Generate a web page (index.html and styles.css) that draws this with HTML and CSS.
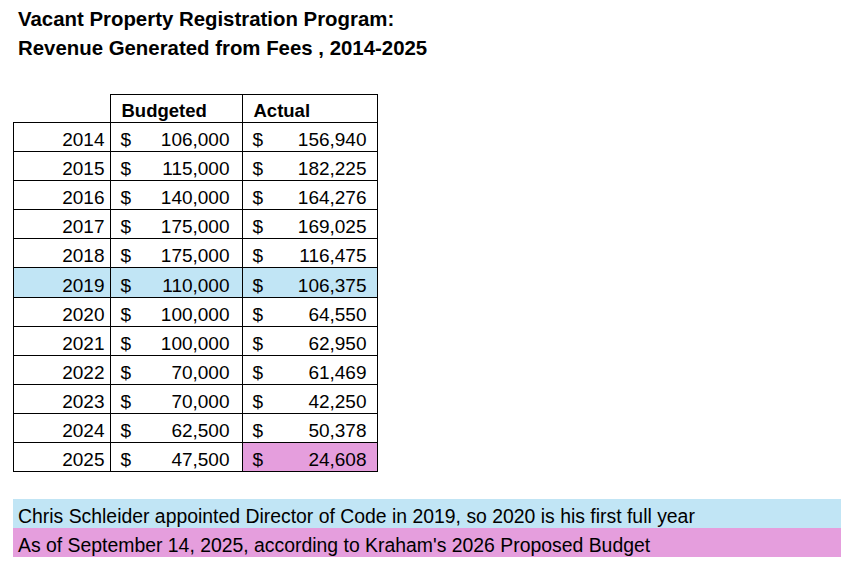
FILE: index.html
```html
<!DOCTYPE html>
<html lang="en">
<head>
<meta charset="utf-8">
<title>Vacant Property Registration Program</title>
<link rel="stylesheet" href="styles.css">
</head>
<body>
<div class="page">
  <h1 class="title">Vacant Property Registration Program:<br>Revenue Generated from Fees , 2014-2025</h1>
  <table class="fees">
    <thead>
      <tr class="head">
        <th class="blank"></th>
        <th class="col">Budgeted</th>
        <th class="col">Actual</th>
      </tr>
    </thead>
    <tbody>
      <tr><td class="year">2014</td><td class="bud"><div class="money"><span>$</span><span>106,000</span></div></td><td class="act"><div class="money"><span>$</span><span>156,940</span></div></td></tr>
      <tr><td class="year">2015</td><td class="bud"><div class="money"><span>$</span><span>115,000</span></div></td><td class="act"><div class="money"><span>$</span><span>182,225</span></div></td></tr>
      <tr><td class="year">2016</td><td class="bud"><div class="money"><span>$</span><span>140,000</span></div></td><td class="act"><div class="money"><span>$</span><span>164,276</span></div></td></tr>
      <tr><td class="year">2017</td><td class="bud"><div class="money"><span>$</span><span>175,000</span></div></td><td class="act"><div class="money"><span>$</span><span>169,025</span></div></td></tr>
      <tr><td class="year">2018</td><td class="bud"><div class="money"><span>$</span><span>175,000</span></div></td><td class="act"><div class="money"><span>$</span><span>116,475</span></div></td></tr>
      <tr class="hl-blue"><td class="year">2019</td><td class="bud"><div class="money"><span>$</span><span>110,000</span></div></td><td class="act"><div class="money"><span>$</span><span>106,375</span></div></td></tr>
      <tr><td class="year">2020</td><td class="bud"><div class="money"><span>$</span><span>100,000</span></div></td><td class="act"><div class="money"><span>$</span><span>64,550</span></div></td></tr>
      <tr><td class="year">2021</td><td class="bud"><div class="money"><span>$</span><span>100,000</span></div></td><td class="act"><div class="money"><span>$</span><span>62,950</span></div></td></tr>
      <tr><td class="year">2022</td><td class="bud"><div class="money"><span>$</span><span>70,000</span></div></td><td class="act"><div class="money"><span>$</span><span>61,469</span></div></td></tr>
      <tr><td class="year">2023</td><td class="bud"><div class="money"><span>$</span><span>70,000</span></div></td><td class="act"><div class="money"><span>$</span><span>42,250</span></div></td></tr>
      <tr><td class="year">2024</td><td class="bud"><div class="money"><span>$</span><span>62,500</span></div></td><td class="act"><div class="money"><span>$</span><span>50,378</span></div></td></tr>
      <tr><td class="year">2025</td><td class="bud"><div class="money"><span>$</span><span>47,500</span></div></td><td class="act hl-pink"><div class="money"><span>$</span><span>24,608</span></div></td></tr>
    </tbody>
  </table>
  <div class="notes">
    <div class="note note-blue">Chris Schleider appointed Director of Code in 2019, so 2020 is his first full year</div>
    <div class="note note-pink">As of September 14, 2025, according to Kraham's 2026 Proposed Budget</div>
  </div>
</div>
</body>
</html>
```

FILE: styles.css
```css
html, body {
  margin: 0;
  padding: 0;
  background: #ffffff;
}

body {
  font-family: "Liberation Sans", Arial, sans-serif;
  color: #000000;
}

.page {
  padding: 5px 0 0 0;
}

.title {
  margin: 0;
  padding-left: 18px;
  font-size: 20.4px;
  font-weight: bold;
  line-height: 29px;
}

.fees {
  margin: 31px 0 0 13px;
  border-collapse: collapse;
  table-layout: fixed;
  font-size: 19px;
}

.fees th,
.fees td {
  padding: 0;
  border: 1px solid #000000;
  vertical-align: bottom;
  line-height: 20px;
  padding-bottom: 1px;
}

.fees .head {
  height: 28px;
}

.fees tbody tr {
  height: 29.1px;
}

.fees th.blank {
  border: none;
  width: 96px;
}

.fees th.col {
  text-align: left;
  font-size: 18.5px;
  font-weight: bold;
  padding-left: 11px;
}

.fees th.col:nth-child(2) {
  width: 120px;
}

.fees th.col:nth-child(3) {
  width: 123px;
}

.fees td.year {
  text-align: right;
  padding-right: 5px;
}

.fees td.bud {
  padding-left: 10px;
  padding-right: 12px;
}

.fees td.act {
  padding-left: 10px;
  padding-right: 10px;
}

.money {
  display: flex;
  justify-content: space-between;
}

.hl-blue td,
.note-blue {
  background: #c1e5f5;
}

.hl-pink,
.note-pink {
  background: #e59edd;
}

.notes {
  margin: 27px 3px 0 13px;
}

.note {
  height: 29px;
  box-sizing: border-box;
  padding: 7px 0 0 5px;
  font-size: 19.4px;
  line-height: 20px;
  white-space: nowrap;
}
```
